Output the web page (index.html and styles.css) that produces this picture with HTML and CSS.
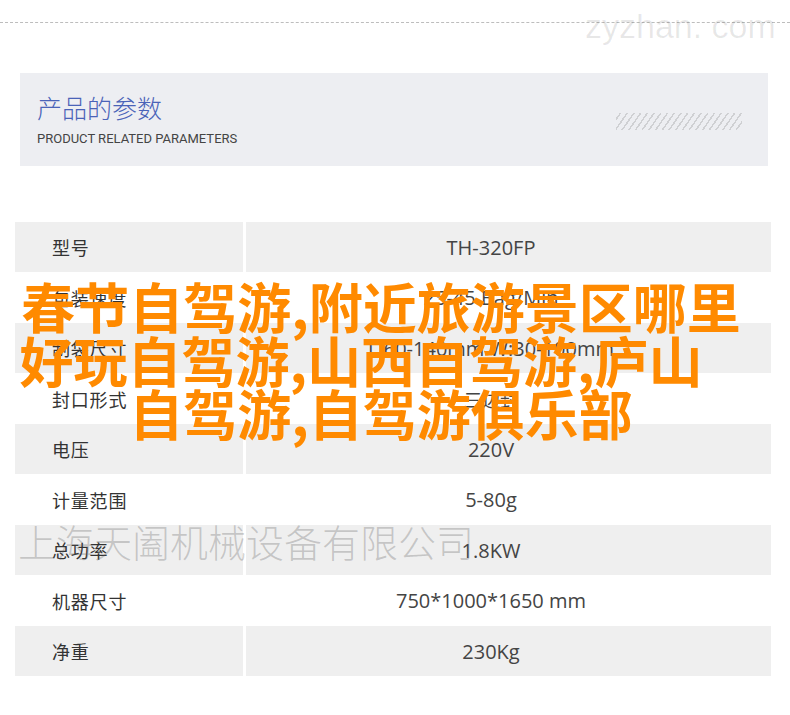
FILE: index.html
```html
<!DOCTYPE html>
<html lang="zh-CN">
<head>
    <meta charset="UTF-8">
    <meta name="viewport" content="width=device-width, initial-scale=1.0">
    <title>产品的参数</title>
    <link rel="stylesheet" href="styles.css">
</head>
<body>
    <div class="page">
        <div class="site-mark">zyzhan. com</div>
        <div class="dash-line"></div>

        <!-- Section title -->
        <div class="params-head">
            <div>
                <h2 class="params-title">产品的参数</h2>
                <p class="params-sub">PRODUCT RELATED PARAMETERS</p>
            </div>
            <div class="hatch"></div>
        </div>

        <!-- Parameter table -->
        <div class="params-table">
            <div class="row shaded"><div class="cell label">型号</div><div class="cell value">TH-320FP</div></div>
            <div class="row"><div class="cell label">包装速度</div><div class="cell value">25-45 Bag/Min</div></div>
            <div class="row shaded"><div class="cell label">制袋尺寸</div><div class="cell value">L:60-140mm W:30-100mm</div></div>
            <div class="row"><div class="cell label">封口形式</div><div class="cell value cjk">三边封</div></div>
            <div class="row shaded"><div class="cell label">电压</div><div class="cell value">220V</div></div>
            <div class="row"><div class="cell label">计量范围</div><div class="cell value">5-80g</div></div>
            <div class="row shaded"><div class="cell label">总功率</div><div class="cell value">1.8KW</div></div>
            <div class="row"><div class="cell label">机器尺寸</div><div class="cell value">750*1000*1650 mm</div></div>
            <div class="row shaded"><div class="cell label">净重</div><div class="cell value">230Kg</div></div>
        </div>

        <div class="company-mark">上海天阖机械设备有限公司</div>

        <div class="headline">
            <span class="headline-line">春节自驾游,附近旅游景区哪里</span>
            <span class="headline-line shift">好玩自驾游,山西自驾游,庐山</span>
            <span class="headline-line">自驾游,自驾游俱乐部</span>
        </div>
    </div>
</body>
</html>
```

FILE: styles.css
```css
body {
    margin: 0;
    background-color: #fff;
    font-family: "Open Sans", "Noto Sans CJK SC", sans-serif;
    color: #444;
}

.page {
    position: relative;
    width: 790px;
    height: 715px;
    overflow: hidden;
}

/* Top dashed rule and site watermark */
.dash-line {
    margin-top: 22px;
    border-top: 1px dashed #bdbdbd;
}

.site-mark {
    position: absolute;
    top: 6px;
    left: 585px;
    font-family: "Liberation Sans", sans-serif;
    font-size: 34px;
    line-height: 40px;
    color: rgba(0, 0, 0, 0.09);
    white-space: nowrap;
}

/* Section title */
.params-head {
    margin: 50px 22px 0 20px;
    height: 93px;
    background-color: #edeef2;
    padding: 0 26px 0 17px;
    display: flex;
    justify-content: space-between;
    align-items: center;
}

.params-title {
    margin: 0;
    font-family: "Noto Sans CJK SC", sans-serif;
    font-weight: 300;
    font-size: 25px;
    line-height: 30px;
    color: #4a63b8;
}

.params-sub {
    margin: 9px 0 0;
    font-family: Roboto, sans-serif;
    font-size: 13px;
    line-height: 16px;
    color: #444;
}

.hatch {
    width: 126px;
    height: 17px;
    margin-top: 4px;
    background: repeating-linear-gradient(-55deg, transparent 0 4px, #cfd0d3 4px 5.5px);
}

/* Table */
.params-table {
    margin: 56px 0 0 15px;
    width: 756px;
}

.row {
    display: grid;
    grid-template-columns: 228px 525px;
    column-gap: 3px;
    height: 51px;
}

.row.shaded {
    height: 50px;
}

.row.shaded .cell {
    background-color: #efefef;
}

.cell {
    display: flex;
    align-items: center;
}

.label {
    padding-left: 37px;
    font-family: "Noto Sans CJK SC", sans-serif;
    font-size: 18px;
    letter-spacing: 0.8px;
    color: #333;
}

.value {
    justify-content: center;
    padding-right: 35px;
    font-size: 20px;
    color: #444;
}

.value.cjk {
    font-family: "Noto Sans CJK SC", sans-serif;
    font-size: 18px;
}

/* Overlays */
.company-mark {
    position: absolute;
    top: 518px;
    left: 18px;
    font-family: "Noto Sans CJK SC", sans-serif;
    font-weight: 300;
    font-size: 38px;
    line-height: 46px;
    color: rgba(90, 90, 90, 0.28);
    white-space: nowrap;
}

.headline {
    position: absolute;
    top: 279px;
    left: 0;
    width: 762px;
    text-align: center;
    font-family: "Noto Sans CJK SC", sans-serif;
    font-weight: 700;
    font-size: 54px;
    line-height: 53.5px;
    color: #ff8a00;
}

.headline-line {
    display: block;
    white-space: nowrap;
}

.headline-line.shift {
    padding-right: 40px;
}
```
